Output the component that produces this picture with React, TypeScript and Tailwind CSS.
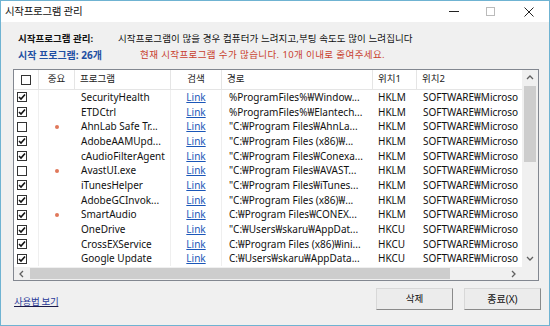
import React from 'react';

type Row = {
  checked: boolean;
  important: boolean;
  name: string;
  path: string;
  loc1: string;
};

const rows: Row[] = [
  { checked: true, important: false, name: 'SecurityHealth', path: '%ProgramFiles%₩Window...', loc1: 'HKLM' },
  { checked: true, important: false, name: 'ETDCtrl', path: '%ProgramFiles%₩Elantech...', loc1: 'HKLM' },
  { checked: false, important: true, name: 'AhnLab Safe Tr...', path: '"C:₩Program Files₩AhnLa...', loc1: 'HKLM' },
  { checked: true, important: false, name: 'AdobeAAMUpd...', path: '"C:₩Program Files (x86)₩...', loc1: 'HKLM' },
  { checked: true, important: false, name: 'cAudioFilterAgent', path: '"C:₩Program Files₩Conexa...', loc1: 'HKLM' },
  { checked: false, important: true, name: 'AvastUI.exe', path: '"C:₩Program Files₩AVAST...', loc1: 'HKLM' },
  { checked: true, important: false, name: 'iTunesHelper', path: '"C:₩Program Files₩iTunes...', loc1: 'HKLM' },
  { checked: true, important: false, name: 'AdobeGCInvok...', path: '"C:₩Program Files (x86)₩...', loc1: 'HKLM' },
  { checked: true, important: true, name: 'SmartAudio', path: 'C:₩Program Files₩CONEX...', loc1: 'HKLM' },
  { checked: true, important: false, name: 'OneDrive', path: '"C:₩Users₩skaru₩AppDat...', loc1: 'HKCU' },
  { checked: true, important: false, name: 'CrossEXService', path: 'C:₩Program Files (x86)₩ini...', loc1: 'HKCU' },
  { checked: true, important: false, name: 'Google Update', path: 'C:₩Users₩skaru₩AppData...', loc1: 'HKCU' },
];

function CheckBox({ checked }: { checked: boolean }) {
  return (
    <div className="w-[10px] h-[10px] border border-[#333] bg-white flex items-center justify-center">
      {checked && (
        <svg width="8" height="8" viewBox="0 0 8 8">
          <path d="M1 4 L3 6 L7 1.5" fill="none" stroke="#111" strokeWidth="1.6" />
        </svg>
      )}
    </div>
  );
}

function Chevron({ dir }: { dir: 'up' | 'down' | 'left' | 'right' }) {
  const d = {
    up: 'M1 5 L4 2 L7 5',
    down: 'M1 2 L4 5 L7 2',
    left: 'M5 1 L2 4 L5 7',
    right: 'M2 1 L5 4 L2 7',
  }[dir];
  return (
    <svg width="8" height="8" viewBox="0 0 8 8">
      <path d={d} fill="none" stroke="#606060" strokeWidth="1.3" />
    </svg>
  );
}

export default function App() {
  return (
    <div className="w-[550px] h-[326px] overflow-hidden border border-[#6fb3d2] bg-[#f0f0f0] flex flex-col font-['Noto_Sans','Noto_Sans_CJK_KR',sans-serif] text-[#111]">
      {/* Title bar */}
      <div className="h-[21px] bg-white flex items-center shrink-0">
        <span className="pl-[4px] text-[10.5px] tracking-[-0.3px] flex-1">시작프로그램 관리</span>
        <div className="flex items-center">
          <div className="w-[37px] flex justify-center">
            <div className="w-[10px] h-px bg-[#222]" />
          </div>
          <div className="w-[37px] flex justify-center">
            <div className="w-[9px] h-[9px] border border-[#bbb]" />
          </div>
          <div className="w-[40px] flex justify-center">
            <svg width="10" height="10" viewBox="0 0 10 10">
              <path d="M0.5 0.5 L9.5 9.5 M9.5 0.5 L0.5 9.5" stroke="#222" strokeWidth="1" />
            </svg>
          </div>
        </div>
      </div>

      {/* Info lines */}
      <div className="pl-[17px] pt-[9px] flex items-center h-[25px] text-[9.5px]">
        <span className="w-[100px] font-bold tracking-[0px]">시작프로그램 관리:</span>
        <span className="tracking-[0.1px]">시작프로그램이 많을 경우 컴퓨터가 느려지고,부팅 속도도 많이 느려집니다</span>
      </div>
      <div className="pl-[17px] flex items-center h-[16px] text-[9.5px]">
        <span className="w-[122px] font-bold text-[#1f4fa3] text-[10px]">시작 프로그램: 26개</span>
        <span className="text-[#c8402e] tracking-[0.4px]">현재 시작프로그램 수가 많습니다. 10개 이내로 줄여주세요.</span>
      </div>

      {/* List */}
      <div className="ml-[12px] mt-[6px] w-[526px] h-[212px] border border-[#828790] bg-white flex flex-col shrink-0">
        <div className="flex flex-1 min-h-0">
          <div className="flex-1 overflow-hidden text-[10px]">
            {/* Header */}
            <div className="flex h-[20px] border-b border-[#e5e5e5] text-[9.5px] text-[#222]">
              <div className="w-[25px] shrink-0 border-r border-[#e5e5e5] flex items-center justify-center">
                <CheckBox checked={false} />
              </div>
              <div className="w-[36px] shrink-0 border-r border-[#e5e5e5] flex items-center justify-center">중요</div>
              <div className="w-[96px] shrink-0 border-r border-[#e5e5e5] flex items-center pl-[5px]">프로그램</div>
              <div className="w-[51px] shrink-0 border-r border-[#e5e5e5] flex items-center justify-center">검색</div>
              <div className="w-[151px] shrink-0 border-r border-[#e5e5e5] flex items-center pl-[5px]">경로</div>
              <div className="w-[44px] shrink-0 border-r border-[#e5e5e5] flex items-center pl-[5px]">위치1</div>
              <div className="flex-1 flex items-center pl-[5px]">위치2</div>
            </div>
            {/* Rows */}
            {rows.map((r) => (
              <div key={r.name} className="flex h-[14.7px] items-center whitespace-nowrap">
                <div className="w-[25px] h-full shrink-0 border-r border-[#efefef] flex items-center pl-[3px]">
                  <CheckBox checked={r.checked} />
                </div>
                <div className="w-[36px] h-full shrink-0 flex items-center justify-center">
                  {r.important && <div className="w-[4px] h-[4px] rounded-full bg-[#e0785a]" />}
                </div>
                <div className="w-[96px] h-full shrink-0 border-r border-[#efefef] flex items-center pl-[6px] overflow-hidden">{r.name}</div>
                <div className="w-[51px] h-full shrink-0 border-r border-[#efefef] flex items-center justify-center">
                  <span className="text-[#1a56b8] underline">Link</span>
                </div>
                <div className="w-[151px] h-full shrink-0 flex items-center pl-[7px] overflow-hidden">{r.path}</div>
                <div className="w-[44px] h-full shrink-0 flex items-center pl-[5px]">{r.loc1}</div>
                <div className="flex-1 h-full flex items-center pl-[6px] overflow-hidden">SOFTWARE₩Microso</div>
              </div>
            ))}
          </div>
          {/* Vertical scrollbar */}
          <div className="w-[16px] shrink-0 bg-[#f0f0f0] flex flex-col">
            <div className="h-[16px] flex items-center justify-center">
              <Chevron dir="up" />
            </div>
            <div className="flex-1 px-[2px]">
              <div className="h-[76px] bg-[#cdcdcd]" />
            </div>
            <div className="h-[16px] flex items-center justify-center">
              <Chevron dir="down" />
            </div>
          </div>
        </div>
        {/* Horizontal scrollbar */}
        <div className="h-[13px] flex shrink-0">
          <div className="flex-1 bg-[#f0f0f0] flex items-center">
            <div className="w-[16px] flex justify-center">
              <Chevron dir="left" />
            </div>
            <div className="w-[420px] h-[11px] bg-[#cdcdcd]" />
            <div className="flex-1" />
            <div className="w-[16px] flex justify-center">
              <Chevron dir="right" />
            </div>
          </div>
          <div className="w-[16px] bg-[#f0f0f0]" />
        </div>
      </div>

      {/* Bottom */}
      <div className="flex items-center h-[22px] mt-[7px] pl-[13px] pr-[8px]">
        <span className="text-[9.5px] text-[#2a3a9a] underline decoration-[#1a1a4a] tracking-[-0.3px] mt-[6px]">사용법 보기</span>
        <div className="flex-1" />
        <button className="w-[77px] h-[22px] bg-[#ececec] border border-t-[#d8d8d8] border-l-[#d8d8d8] border-r-[#8a8a8a] border-b-[#8a8a8a] text-[9.5px]">삭제</button>
        <button className="ml-[11px] w-[77px] h-[22px] bg-[#ececec] border border-t-[#d8d8d8] border-l-[#d8d8d8] border-r-[#8a8a8a] border-b-[#8a8a8a] text-[10px]">종료(X)</button>
      </div>
    </div>
  );
}
